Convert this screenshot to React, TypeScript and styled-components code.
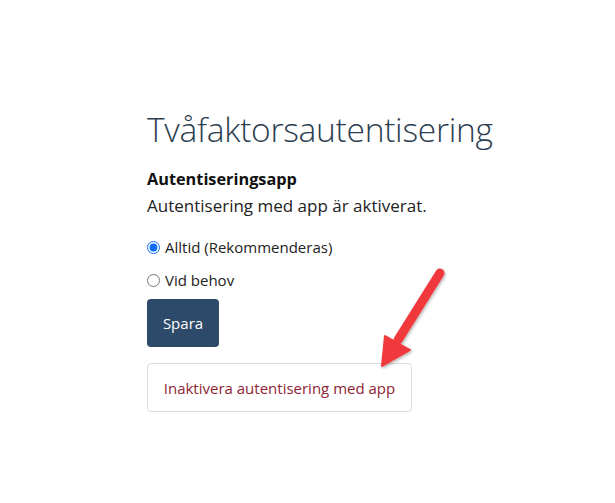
import React from "react";
import styled, { createGlobalStyle } from "styled-components";

const Global = createGlobalStyle`
  html, body { margin: 0; padding: 0; background: #fff; }
  body { font-family: "Open Sans", "Noto Sans", sans-serif; color: #212529; }
`;

const Page = styled.div`
  position: relative;
  width: 615px;
  height: 503px;
  box-sizing: border-box;
  padding: 103px 0 0 147px;
`;

const Title = styled.h1`
  margin: 0 0 12px 0;
  font-family: "Open Sans", sans-serif;
  font-weight: 300;
  font-size: 33.6px;
  line-height: 52px;
  color: #2c3e50;
  letter-spacing: -0.3px;
`;

const Subtitle = styled.h2`
  margin: 0;
  font-size: 16.3px;
  font-weight: 700;
  line-height: 24px;
  color: #111;
`;

const Status = styled.p`
  margin: 2px 0 16px 0;
  font-size: 17px;
  line-height: 26px;
  color: #222;
`;

const Options = styled.div`
  display: flex;
  flex-direction: column;
  gap: 9px;
  margin-bottom: 7px;
`;

const OptionLabel = styled.label`
  display: flex;
  align-items: center;
  gap: 5px;
  font-size: 15px;
  line-height: 24px;
  color: #222;
`;

const Radio = styled.input`
  margin: 0;
  width: 13px;
  height: 13px;
  accent-color: #0d6efd;
`;

const Actions = styled.div`
  display: flex;
  flex-direction: column;
  align-items: flex-start;
  gap: 16px;
`;

const SaveButton = styled.button`
  height: 48px;
  width: 72px;
  border: none;
  border-radius: 4px;
  background: #2e4a6b;
  color: #fff;
  font-family: "Open Sans", sans-serif;
  font-size: 15px;
`;

const DisableButton = styled.button`
  height: 49px;
  width: 265px;
  border: 1px solid #dcdcdc;
  border-radius: 4px;
  background: #fff;
  color: #8e2435;
  font-family: "Open Sans", sans-serif;
  font-size: 15px;
`;

const Arrow = styled.svg`
  position: absolute;
  left: 370px;
  top: 260px;
`;

export default function App() {
  return (
    <>
      <Global />
      <Page>
        <Title>Tvåfaktorsautentisering</Title>
        <Subtitle>Autentiseringsapp</Subtitle>
        <Status>Autentisering med app är aktiverat.</Status>
        <Options>
          <OptionLabel>
            <Radio type="radio" name="mode" defaultChecked />
            Alltid (Rekommenderas)
          </OptionLabel>
          <OptionLabel>
            <Radio type="radio" name="mode" />
            Vid behov
          </OptionLabel>
        </Options>
        <Actions>
          <SaveButton>Spara</SaveButton>
          <DisableButton>Inaktivera autentisering med app</DisableButton>
        </Actions>
        <Arrow width="90" height="110" viewBox="0 0 90 110">
          <defs>
            <filter id="sh" x="-30%" y="-30%" width="160%" height="160%">
              <feDropShadow dx="1" dy="1.5" stdDeviation="1.5" floodColor="#000" floodOpacity="0.3" />
            </filter>
          </defs>
          <g filter="url(#sh)">
            <line x1="70" y1="13" x2="28" y2="80" stroke="#f0393d" strokeWidth="9" strokeLinecap="round" />
            <polygon points="12,106 15,76 40,90" fill="#f0393d" stroke="#f0393d" strokeWidth="2" strokeLinejoin="round" />
          </g>
        </Arrow>
      </Page>
    </>
  );
}
